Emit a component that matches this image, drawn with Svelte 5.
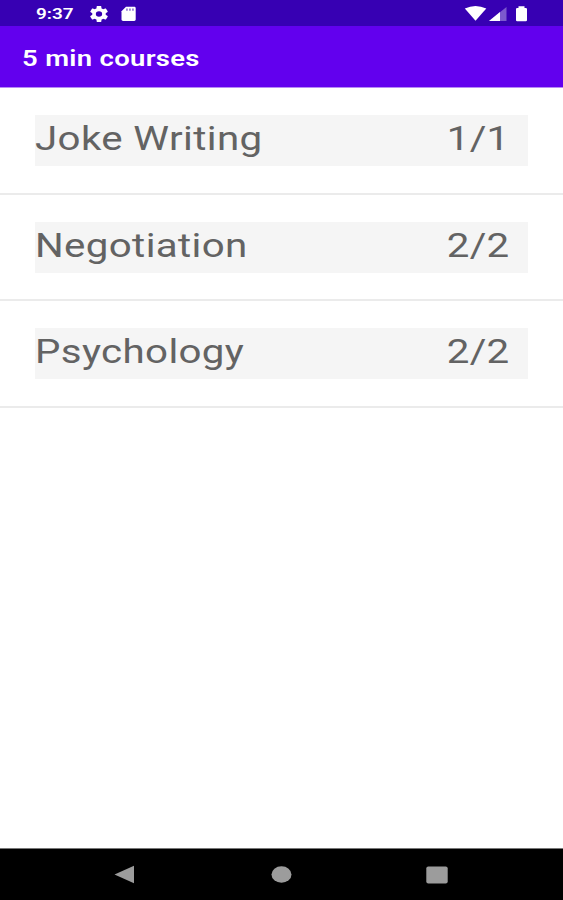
<script>
  const courses = [
    { name: 'Joke Writing', progress: '1/1' },
    { name: 'Negotiation', progress: '2/2' },
    { name: 'Psychology', progress: '2/2' }
  ];
</script>

<div class="screen">
  <header class="status">
    <span class="time wide">9:37</span>
    <svg class="gear" width="18" height="16" viewBox="2 2 20 20" preserveAspectRatio="none"><path d="M19.4 13c0-.3.1-.6.1-1s0-.7-.1-1l2.100-1.650c.2-.15.25-.4.12-.64l-2-3.460c-.12-.22-.39-.3-.61-.22l-2.490 1c-.52-.4-1.080-.73-1.690-.98l-.38-2.650C14.460 2.180 14.250 2 14 2h-4c-.25 0-.46.18-.49.42l-.38 2.650c-.61.25-1.170.59-1.690.98l-2.490-1c-.23-.09-.49 0-.61.22l-2 3.460c-.13.22-.07.49.12.64L4.570 11c-.04.32-.07.65-.07 1s.03.68.07 1l-2.110 1.650c-.19.15-.24.42-.12.64l2 3.460c.12.22.39.3.61.22l2.490-1c.52.4 1.080.73 1.690.98l.38 2.650c.03.24.24.42.49.42h4c.25 0 .46-.18.49-.42l.38-2.650c.61-.25 1.170-.59 1.690-.98l2.490 1c.23.09.49 0 .61-.22l2-3.460c.12-.22.07-.49-.12-.64zM12 15.500a3.500 3.500 0 1 1 0-7 3.500 3.500 0 0 1 0 7z" /></svg>
    <svg class="card" width="15" height="16" viewBox="0 0 15 16"><path d="M5 .7h8.200c.9 0 1.500.6 1.500 1.400v11.500c0 .8-.6 1.400-1.500 1.400H2.100C1.200 15 .5 14.400.5 13.600V5.200z" /><path class="slot" d="M5.200 2.600h1.500v2.200H5.200zm3 0h1.500v2.200H8.200zm3 0h1.500v2.200h-1.500z" /></svg>
    <svg class="signals" width="64" height="17" viewBox="0 0 64 17"><path d="M.8 3.600Q11.500-1.800 22.300 3.600L11.500 15.700z" /><path class="faint" d="M42.500 2.100v14H25z" /><path d="M36 7.100v9H25z" /><path d="M54.500 1.200h6v1.700h1.300q1.200 0 1.200 1.200v10.900q0 1.200-1.200 1.200h-8.600q-1.200 0-1.200-1.200V4.100q0-1.200 1.200-1.200h1.300z" /></svg>
  </header>
  <div class="appbar"><span class="title wide">5 min courses</span></div>
  <main>
    {#each courses as course}
      <div class="row">
        <div class="course">
          <span class="name wide">{course.name}</span>
          <span class="progress wide">{course.progress}</span>
        </div>
      </div>
    {/each}
  </main>
  <nav>
    <svg width="21" height="19" viewBox="0 0 21 19"><path d="M.5 9.500 20 .7v17.600z" /></svg>
    <svg class="home" width="21" height="17" viewBox="0 0 21 17"><ellipse cx="10.500" cy="8.500" rx="10" ry="8.300" /></svg>
    <svg width="22" height="18" viewBox="0 0 22 18"><rect x=".3" y=".4" width="21.400" height="17.200" rx="2" /></svg>
  </nav>
</div>

<style>
  .screen {
    display: flex;
    flex-direction: column;
    width: 563px;
    height: 900px;
    overflow: hidden;
    background: #fff;
    font-family: Roboto, sans-serif;
  }
  svg { display: block; flex: none; }
  .wide { display: block; white-space: nowrap; transform: scaleX(1.22); transform-origin: left center; }
  .status {
    display: flex;
    box-sizing: border-box;
    height: 26px;
    padding: 0 35px 0 36px;
    background: #3700b3;
    fill: #fff;
  }
  .time { width: 54px; color: #fff; font-size: 15.500px; font-weight: 600; line-height: 28px; }
  .gear { margin-top: 6px; }
  .card { margin: 6px 0 0 13px; }
  .slot { fill: #3700b3; opacity: .6; }
  .signals { margin: 5px 0 0 auto; }
  .faint { opacity: .35; }
  .appbar {
    box-sizing: border-box;
    height: 62px;
    padding-left: 22px;
    background: #6200ee;
    border-bottom: 1px solid #b58af5;
  }
  .title { color: #fff; font-size: 22.500px; font-weight: 600; letter-spacing: .26px; line-height: 64px; }
  main { flex: 1; }
  .row { box-sizing: border-box; height: 106.700px; padding: 27px 35px 0; border-bottom: 2px solid #ebebeb; }
  .course {
    display: flex;
    justify-content: space-between;
    height: 51px;
    padding-right: 18px;
    background: #f5f5f5;
    color: #636363;
    font-size: 33px;
    letter-spacing: .3px;
    line-height: 48.500px;
  }
  .progress { transform-origin: right center; }
  nav {
    display: flex;
    align-items: center;
    box-sizing: border-box;
    height: 52px;
    padding: 0 115px 0 114px;
    justify-content: space-between;
    background: #000;
    border-top: 1px solid #777;
    fill: #9c9c9c;
  }
  .home { margin-left: 1.500px; }
</style>
